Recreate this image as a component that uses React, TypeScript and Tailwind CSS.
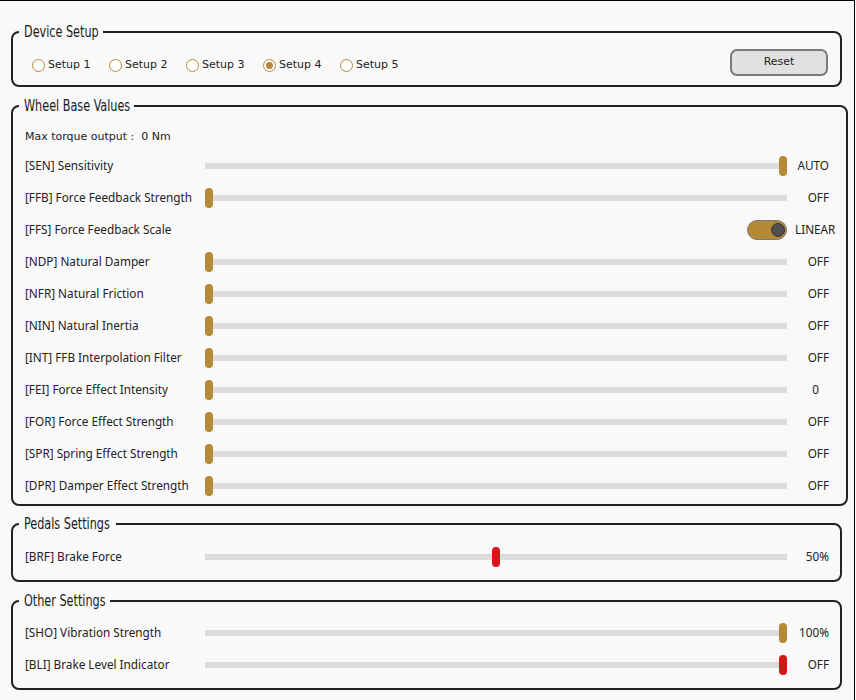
import React from "react";

const GOLD = "#b58a36";
const RED = "#d91414";

const labelFont = { fontFamily: "'Noto Sans', 'DejaVu Sans', sans-serif" };

function Legend({ children, w }: { children: React.ReactNode; w: number }) {
  return (
    <legend
      className="-ml-[6px] px-[5px] h-[20px] leading-[20px] text-[16px] text-[#1a1a1a] overflow-visible whitespace-nowrap"
      style={{ fontFamily: "'DejaVu Sans Condensed', 'DejaVu Sans', sans-serif" }}
    >
      <div className="h-[20px]" style={{ width: w }}>
        <span className="inline-block origin-left scale-x-[0.78]">{children}</span>
      </div>
    </legend>
  );
}

function Slider({ pct, color }: { pct: number; color: string }) {
  const left = (582 - 8) * pct;
  return (
    <div className="relative w-[582px] h-[20px] flex items-center">
      <div className="w-full h-[6px] bg-[#dcdcdc]" />
      <div
        className="absolute top-0 w-[8px] h-[20px] rounded-full"
        style={{ left, backgroundColor: color }}
      />
    </div>
  );
}

function Row({
  label,
  value,
  pct,
  color = GOLD,
  valueClass = "",
}: {
  label: string;
  value: string;
  pct: number;
  color?: string;
  valueClass?: string;
}) {
  return (
    <div className="h-[32px] flex items-center">
      <div className="w-[180px] text-[11.75px] text-[#222] whitespace-nowrap" style={labelFont}>
        {label}
      </div>
      <Slider pct={pct} color={color} />
      <div className={`w-[42px] text-right text-[11.75px] text-[#222] ${valueClass}`} style={labelFont}>
        {value}
      </div>
    </div>
  );
}

function Radio({ label, checked }: { label: string; checked?: boolean }) {
  return (
    <div className="w-[77px] flex items-center gap-[3px]">
      <div className="w-[13px] h-[13px] rounded-full border-[1.5px] border-[#b58a36] bg-white flex items-center justify-center">
        {checked && <div className="w-[7px] h-[7px] rounded-full bg-[#b58a36]" />}
      </div>
      <span className="text-[11px] text-[#222]" style={{ fontFamily: "'DejaVu Sans', sans-serif" }}>
        {label}
      </span>
    </div>
  );
}

const wheelRows: { label: string; value: string; pct: number }[] = [
  { label: "[NDP] Natural Damper", value: "OFF", pct: 0 },
  { label: "[NFR] Natural Friction", value: "OFF", pct: 0 },
  { label: "[NIN] Natural Inertia", value: "OFF", pct: 0 },
  { label: "[INT] FFB Interpolation Filter", value: "OFF", pct: 0 },
  { label: "[FEI] Force Effect Intensity", value: "0", pct: 0 },
  { label: "[FOR] Force Effect Strength", value: "OFF", pct: 0 },
  { label: "[SPR] Spring Effect Strength", value: "OFF", pct: 0 },
  { label: "[DPR] Damper Effect Strength", value: "OFF", pct: 0 },
];

export default function App() {
  return (
    <div className="w-[855px] h-[700px] bg-[#f9f9f9] border-t border-r border-black pt-[21px] overflow-hidden">
      {/* Device Setup */}
      <fieldset className="ml-[11px] w-[831px] border-2 border-[#222] rounded-[8px] pl-[12px] pr-[11px] pt-[7px] pb-[9px]">
        <Legend w={74}>Device Setup</Legend>
        <div className="flex items-center h-[27px]">
          <div className="flex items-center pl-[7px] mt-[5px]">
            <Radio label="Setup 1" />
            <Radio label="Setup 2" />
            <Radio label="Setup 3" />
            <Radio label="Setup 4" checked />
            <Radio label="Setup 5" />
          </div>
          <button
            className="ml-auto mr-[1px] w-[98px] h-[27px] rounded-[7px] border-2 border-[#7a7a7a] bg-[#e1e1e1] text-[11px] text-[#222]"
            style={{ fontFamily: "'DejaVu Sans', sans-serif" }}
          >
            Reset
          </button>
        </div>
      </fieldset>

      {/* Wheel Base Values */}
      <fieldset className="mt-[9px] ml-[11px] w-[831px] border-2 border-[#222] rounded-[8px] pl-[12px] pr-[11px] pt-[8px] pb-[2px]">
        <Legend w={105}>Wheel Base Values</Legend>
        <div className="h-[26px] flex items-center text-[11px] text-[#222]" style={{ fontFamily: "'DejaVu Sans', sans-serif" }}>
          Max torque output :&nbsp; 0 Nm
        </div>
        <Row label="[SEN] Sensitivity" value="AUTO" pct={1} />
        <Row label="[FFB] Force Feedback Strength" value="OFF" pct={0} />
        <div className="h-[32px] flex items-center">
          <div className="w-[180px] text-[11.75px] text-[#222]" style={labelFont}>
            [FFS] Force Feedback Scale
          </div>
          <div className="w-[582px] flex justify-end">
            <div className="w-[40px] h-[20px] rounded-full bg-[#b58a36] border-[1.5px] border-[#7a7a7a] flex items-center justify-end pr-[1px]">
              <div className="w-[14px] h-[14px] rounded-full bg-[#505050] border border-[#333]" />
            </div>
          </div>
          <div className="ml-[8px] text-[11.75px] text-[#222]" style={labelFont}>
            LINEAR
          </div>
        </div>
        {wheelRows.map((r) => (
          <Row
            key={r.label}
            label={r.label}
            value={r.value}
            pct={r.pct}
            valueClass={r.value === "0" ? "pr-[10px]" : ""}
          />
        ))}
      </fieldset>

      {/* Pedals Settings */}
      <fieldset className="mt-[8px] ml-[11px] w-[831px] border-2 border-[#222] rounded-[8px] pl-[12px] pr-[11px] pt-[7px] pb-[7px]">
        <Legend w={87}>Pedals Settings</Legend>
        <Row label="[BRF] Brake Force" value="50%" pct={0.5} color={RED} />
      </fieldset>

      {/* Other Settings */}
      <fieldset className="mt-[9px] ml-[11px] w-[831px] border-2 border-[#222] rounded-[8px] pl-[12px] pr-[11px] pt-[6px] pb-[7px]">
        <Legend w={81}>Other Settings</Legend>
        <Row label="[SHO] Vibration Strength" value="100%" pct={1} />
        <Row label="[BLI] Brake Level Indicator" value="OFF" pct={1} color={RED} />
      </fieldset>
    </div>
  );
}
